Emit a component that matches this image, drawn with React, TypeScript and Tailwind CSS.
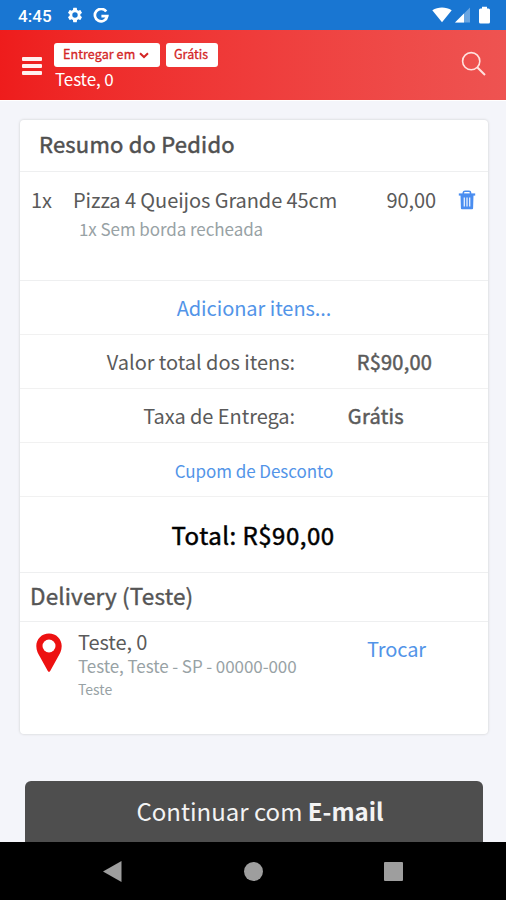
import React from 'react';

function StatusBar() {
  return (
    <div className="flex h-[30px] items-center bg-[#1976d2] pl-[18px] pr-[16px] text-white">
      <span className="w-[48px] pt-[2px] font-['Roboto','Noto_Sans',sans-serif] text-[17px] font-medium leading-[30px] tracking-[0.1px]">4:45</span>
      <svg className="h-[18px] w-[18px]" viewBox="0 0 24 24" fill="currentColor">
        <path d="M19.14 12.94c.04-.3.06-.61.06-.94s-.02-.64-.07-.94l2.03-1.58a.49.49 0 0 0 .12-.61l-1.92-3.32a.49.49 0 0 0-.59-.22l-2.39.96a7 7 0 0 0-1.62-.94l-.36-2.54a.48.48 0 0 0-.48-.41h-3.84a.48.48 0 0 0-.47.41l-.36 2.54c-.59.24-1.13.57-1.62.94l-2.39-.96a.48.48 0 0 0-.59.22L2.73 8.87a.48.48 0 0 0 .12.61l2.03 1.58c-.05.3-.09.63-.09.94s.02.64.07.94l-2.03 1.58a.49.49 0 0 0-.12.61l1.92 3.32c.12.22.37.29.59.22l2.39-.96c.5.38 1.03.7 1.62.94l.36 2.54c.05.24.24.41.48.41h3.84c.24 0 .44-.17.47-.41l.36-2.54a7 7 0 0 0 1.62-.94l2.39.96c.22.08.47 0 .59-.22l1.92-3.32a.48.48 0 0 0-.12-.61zM12 15.6a3.6 3.6 0 1 1 0-7.2 3.6 3.6 0 0 1 0 7.2" />
      </svg>
      <svg className="ml-[9px] mt-[2px] h-[16px] w-[16px]" viewBox="0 0 16 16" fill="none" stroke="currentColor" strokeWidth="2.700">
        <path d="M13.2 3.6A6.2 6.2 0 1 0 14.2 8.200H8.4" />
      </svg>
      <div className="ml-auto flex items-center">
        <svg className="h-[16px] w-[20px]" viewBox="0 0 20 16" fill="currentColor">
          <path d="M.3 3.2C6-.5 14-.5 19.700 3.200L10 15.200z" />
        </svg>
        <svg className="ml-[3px] h-[16px] w-[15px]" viewBox="0 0 15 16" fill="currentColor">
          <path d="M0 15.500L15 .500V15.500z" opacity=".35" />
          <path d="M0 15.500L9 6.500V15.500z" />
        </svg>
        <svg className="ml-[9px] h-[18px] w-[11px]" viewBox="0 0 11 18" fill="currentColor">
          <path d="M3 .8h5v1.700h1.500q1.500 0 1.500 1.500v12q0 1.500-1.500 1.500h-8Q0 17.500 0 16V4q0-1.500 1.500-1.500H3z" />
        </svg>
      </div>
    </div>
  );
}

function Header() {
  return (
    <header className="flex h-[70px] bg-gradient-to-r from-[#ee1c1c] via-[#ef3c3b] to-[#ee5351] pl-[22px] pr-[20px] text-white">
      <div className="mt-[27px] flex w-[20px] flex-col gap-[3px]">
        <div className="h-[4px] rounded-[1px] bg-[#fff0ef]" />
        <div className="h-[4px] rounded-[1px] bg-[#fff0ef]" />
        <div className="h-[4px] rounded-[1px] bg-[#fff0ef]" />
      </div>
      <div className="ml-[12px] pt-[13px]">
        <div className="flex gap-[6px] text-[12.500px] leading-[22px] text-[#d32525] [-webkit-text-stroke:0.3px_currentColor]">
          <div className="flex h-[24px] w-[106px] items-center rounded-[3px] bg-white pl-[9px]">
            <span className="-mt-[3px] whitespace-nowrap tracking-[0.1px]">Entregar em</span>
            <svg className="ml-[4px] h-[7px] w-[10px]" viewBox="0 0 10 7" fill="none" stroke="currentColor" strokeWidth="2">
              <path d="M1 1.200L5 5L9 1.200" />
            </svg>
          </div>
          <div className="h-[24px] w-[52px] rounded-[3px] bg-white pl-[8px]">Grátis</div>
        </div>
        <div className="ml-px text-[17px] leading-[24px] tracking-[-0.1px]">Teste, 0</div>
      </div>
      <svg className="ml-auto mt-[21px] h-[25px] w-[25px]" viewBox="0 0 25 25" fill="none" stroke="#ffe2df" strokeWidth="1.600">
        <circle cx="10.200" cy="10.200" r="8.600" />
        <path d="M16.200 16.200L24 24" strokeWidth="2" />
      </svg>
    </header>
  );
}

function TrashIcon() {
  return (
    <svg className="h-[20px] w-[18px]" viewBox="0 0 18 20" fill="none" stroke="#4a8df0">
      <path d="M.8 4.500h16.400" strokeWidth="2.200" />
      <path d="M5.300 4V2.500Q5.500 1.200 7 1.200h4q1.500 0 1.500 1.300V4" strokeWidth="1.600" />
      <path d="M2.500 5h13l-.4 13q0 1.200-1 1.200H3.900q-1 0-1-1.200z" fill="#4a8df0" stroke="none" />
      <path d="M6.300 7.500v9M9 7.500v9M11.700 7.500v9" stroke="#e6f0ff" strokeWidth="1.300" />
    </svg>
  );
}

export default function App() {
  return (
    <div className="flex h-[900px] w-[506px] flex-col overflow-hidden bg-[#f4f5fa] font-['Noto_Sans_CJK_SC','Noto_Sans',sans-serif] text-[#5a5a5a]">
      <StatusBar />
      <Header />
      <div className="h-px bg-white" />
      <main className="flex flex-1 flex-col px-[20px] pt-[19px]">
        <section className="flex h-[614px] w-[468px] flex-col rounded-[4px] bg-white shadow-[0_0_2px_1px_#e0e1e4] [&>*]:shrink-0">
          <div className="h-[52px] border-b border-[#eeeff0] pl-[19px] text-[22px] leading-[47px] tracking-[0.22px] text-[#505050] [-webkit-text-stroke:0.5px_currentColor]">Resumo do Pedido</div>
          <div className="h-[109px] border-b border-[#eeeff0] pt-[13px]">
            <div className="flex items-center pl-[11px] pr-[12px] text-[20px] leading-[30px] tracking-[-0.08px]">
              <span className="w-[42px]">1x</span>
              <span>Pizza 4 Queijos Grande 45cm</span>
              <span className="ml-auto mr-[22px]">90,00</span>
              <TrashIcon />
            </div>
            <div className="pl-[59px] text-[17px] leading-[28px] tracking-[-0.07px] text-[#98a2a5]">1x Sem borda recheada</div>
          </div>
          <div className="h-[54px] border-b border-[#f1f1f1] text-center text-[20px] leading-[53px] tracking-[-0.05px] text-[#5294e8]">Adicionar itens...</div>
          <div className="flex h-[54px] border-b border-[#f1f1f1] text-[20px] leading-[54px]">
            <span className="w-[275px] text-right tracking-[-0.04px]">Valor total dos itens:</span>
            <span className="w-[137px] text-right tracking-[0.2px] [-webkit-text-stroke:0.5px_currentColor]">R$90,00</span>
          </div>
          <div className="flex h-[54px] border-b border-[#f1f1f1] text-[20px] leading-[54px]">
            <span className="w-[275px] text-right tracking-[-0.06px]">Taxa de Entrega:</span>
            <span className="w-[109px] text-right tracking-[0.3px] [-webkit-text-stroke:0.5px_currentColor]">Grátis</span>
          </div>
          <div className="h-[54px] border-b border-[#f1f1f1] text-center text-[17px] leading-[55px] tracking-[-0.06px] text-[#5294e8]">Cupom de Desconto</div>
          <div className="h-[76px] border-b border-[#eeeff0] pr-[2px] text-center text-[24px] leading-[76px] tracking-[0.5px] text-black [-webkit-text-stroke:0.5px_currentColor]">Total: R$90,00</div>
          <div className="h-[49px] border-b border-[#eeeff0] pl-[10px] text-[22.500px] leading-[44px] tracking-[0.15px] text-[#555] [-webkit-text-stroke:0.4px_currentColor]">Delivery (Teste)</div>
          <div className="flex pl-[16px]">
            <svg className="mt-[11px] h-[40px] w-[26px]" viewBox="0 0 26 40">
              <path d="M13 .5C5.800.5.300 6 .300 13.100C.300 18 2.300 21 4.200 24.300L11.800 38q1.200 1.700 2.400 0l7.600-13.700C23.700 21 25.700 18 25.700 13.100C25.700 6 20.200.5 13 .5z" fill="#ed1111" />
              <circle cx="13" cy="13" r="6.500" fill="white" />
            </svg>
            <div className="ml-[16px] w-[289px] pt-[6px]">
              <div className="text-[20px] leading-[28px] tracking-[-0.08px]">Teste, 0</div>
              <div className="text-[17px] leading-[20px] tracking-[-0.08px] text-[#98a2a5]">Teste, Teste - SP - 00000-000</div>
              <div className="text-[14px] leading-[26px] text-[#98a2a5]">Teste</div>
            </div>
            <div className="text-[20px] leading-[54px] tracking-[-0.1px] text-[#5294e8]">Trocar</div>
          </div>
        </section>
        <button className="ml-[5px] mt-[47px] h-[61px] w-[458px] shrink-0 rounded-t-[6px] bg-[#4e4e4e] pl-[12px] text-[24px] leading-[59px] text-[#f3f3f3]">
          <span className="relative -top-px">Continuar com <b>E-mail</b></span>
        </button>
      </main>
      <nav className="flex h-[58px] items-center bg-black">
        <svg className="ml-[103px] h-[21px] w-[19px]" viewBox="0 0 19 21" fill="#9e9e9e"><path d="M0 10.500L18.500 0V21z" /></svg>
        <div className="ml-[122px] h-[19px] w-[19px] rounded-full bg-[#9e9e9e]" />
        <div className="ml-[121px] h-[19px] w-[19px] rounded-[1px] bg-[#9e9e9e]" />
      </nav>
    </div>
  );
}
